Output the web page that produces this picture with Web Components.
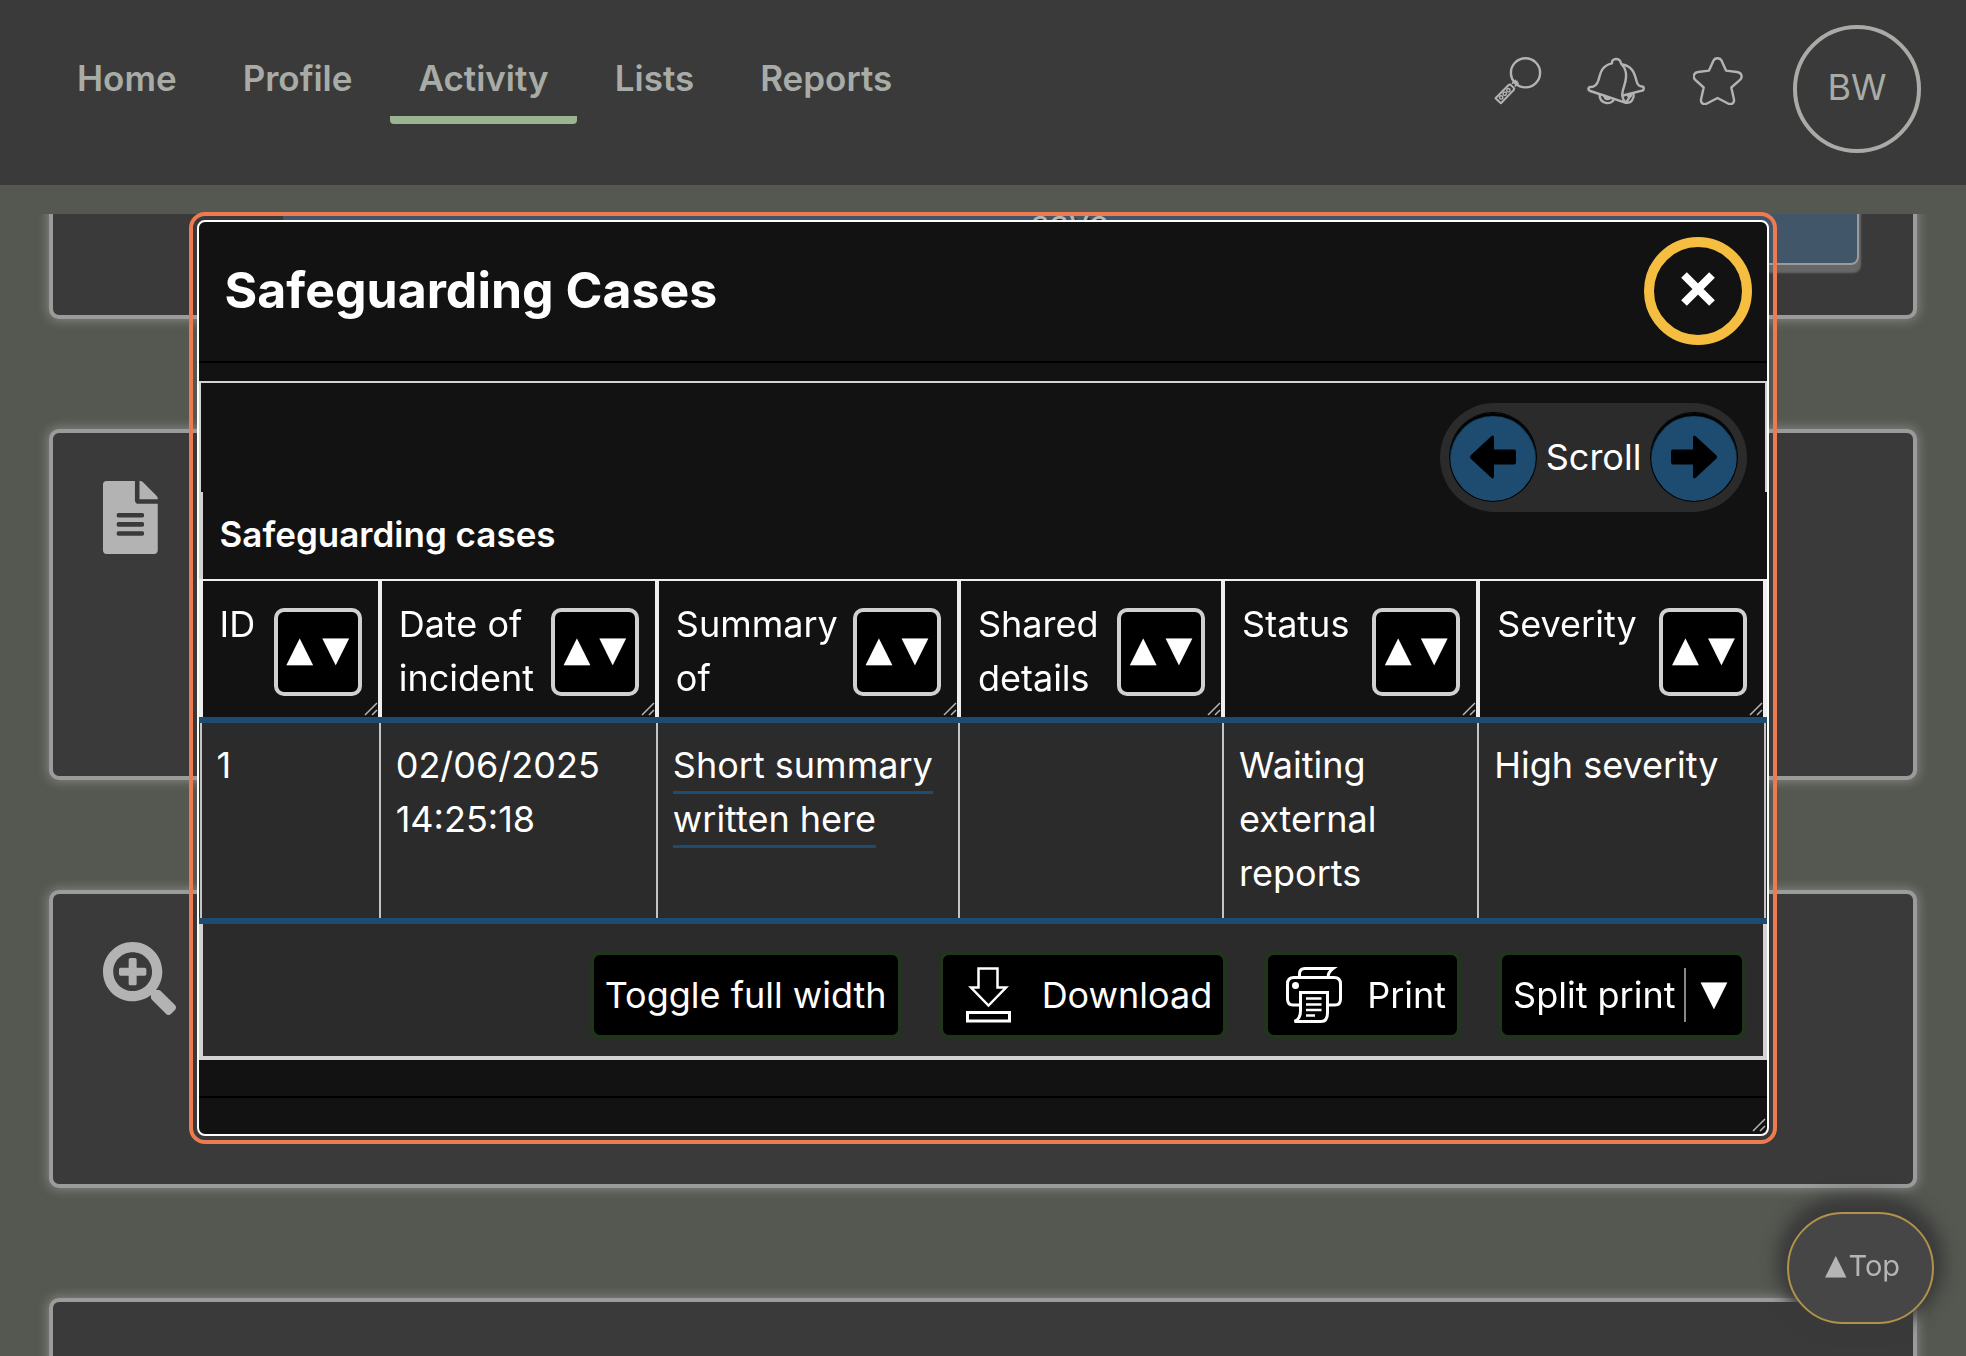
<!DOCTYPE html>
<html lang="en">
<head>
<meta charset="utf-8">
<title>Activity - Safeguarding Cases</title>
<style>
:root {
  --page: #545850;
  --surface: #3a3a3a;
  --edge: #9b9b9b;
  --muted: #a9aca6;
  --icon: #b3b3b3;
  --blue: #1d4c70;
  --ink: #121212;
  --panel: #2b2b2b;
  --rule: #d3d3d3;
  --text: 36px;
  --bold: 35px;
  --line: 54px;
}
html, body { margin: 0; height: 100%; }
body {
  display: flex;
  flex-direction: column;
  overflow: hidden;
  background: var(--page);
  color: #fff;
  font: 400 var(--text)/var(--line) Inter, "Liberation Sans", sans-serif;
}
main {
  flex: 1;
  min-height: 0;
  margin-top: 29px;
  padding: 0 49px;
  overflow: hidden;
  display: flex;
  flex-direction: column;
  gap: 110px;
}
content-card { flex: none; }
content-card:first-child { margin-top: -60px; }
content-card:nth-child(2) { min-height: 351px; }
content-card:nth-child(3) { min-height: 298px; }
content-card:nth-child(4) { min-height: 298px; }
</style>
</head>
<body>
<app-header>
  <nav-link href="#home">Home</nav-link>
  <nav-link href="#profile">Profile</nav-link>
  <nav-link href="#activity" current>Activity</nav-link>
  <nav-link href="#lists">Lists</nav-link>
  <nav-link href="#reports">Reports</nav-link>
</app-header>
<main>
  <content-card><save-button>save</save-button></content-card>
  <content-card icon="file"></content-card>
  <content-card icon="zoom"></content-card>
  <content-card></content-card>
</main>
<back-to-top></back-to-top>
<modal-dialog heading="Safeguarding Cases">
  <case-table></case-table>
</modal-dialog>

<script>
function define(name, markup, setup) {
  const template = document.createElement("template");
  customElements.define(name, class extends HTMLElement {
    constructor() {
      super();
      template.innerHTML = markup;
      this.attachShadow({ mode: "open" }).append(template.content.cloneNode(true));
    }
    connectedCallback() { if (setup) setup(this, this.shadowRoot); }
  });
}

const base = `:host,*{box-sizing:border-box} button{font:inherit;color:inherit;margin:0;padding:0;cursor:pointer} svg{display:block}`;

define("nav-link", `
<style>${base}
:host { display: block; }
a { display: block; padding: 0 28px 11px; border-bottom: 8px solid transparent; border-radius: 4px; color: var(--muted); font-size: var(--bold); font-weight: 600; text-decoration: none; }
:host([current]) a { border-bottom-color: #9cb491; }
</style>
<a><slot></slot></a>`, (el, root) => {
  const a = root.querySelector("a");
  a.href = el.getAttribute("href");
  if (el.hasAttribute("current")) a.setAttribute("aria-current", "page");
});

define("app-header", `
<style>${base}
:host { display: flex; justify-content: space-between; align-items: flex-start; flex: none; height: 185px; padding: 25px 45px 0 49px; background: var(--surface); }
nav { display: flex; gap: 10px; padding-top: 26px; }
.tools { display: flex; align-items: center; gap: 40px; }
.tools button { width: 60px; padding-bottom: 16px; border: 0; background: none; display: flex; justify-content: center; }
.tools svg { flex: none; fill: none; stroke: var(--icon); stroke-width: 2.4; stroke-linejoin: round; stroke-linecap: round; }
.tools .avatar { width: 128px; height: 128px; margin-left: 5px; padding: 0 0 4px; align-items: center; border: 4px solid var(--muted); border-radius: 50%; color: var(--muted); }
</style>
<nav aria-label="Main"><slot></slot></nav>
<div class="tools">
  <button aria-label="Search"><svg width="48" height="48" viewBox="0 0 48 48">
    <circle cx="31.5" cy="15.8" r="14.6"/><path d="M18.6 26.2l2.7-2.7M21.3 28.8l2.7-2.7M21.5 26l1.5-1.5" stroke-width="1.8"/><path d="M1.500 41.200L14.600 28l1.600-.6 4 4-.6 1.700L6.900 46.200z" stroke-width="2"/><circle cx="7.200" cy="40.400" r="1.700" stroke-width="1.500"/><circle cx="10.800" cy="36.800" r="1.700" stroke-width="1.500"/><circle cx="14.400" cy="33.200" r="1.700" stroke-width="1.500"/>
  </svg></button>
  <button aria-label="Notifications"><svg width="62" height="48" viewBox="0 0 62 48">
    <path d="M25 6C24 1 33.500 0 34 6.500M25 6.300C13 9 13 19 11.500 23C10 28.500 7 30 3.500 30C.8 30.300.8 33.400 3.300 34L39 45.800C36 43 34.500 40 35.500 35C36.500 29 41 22 38.500 14C37.500 10.500 36 8.500 34 6.500"/>
    <path d="M35.500 7.500C45 9 47.500 16 49.500 24C50.500 28 52.500 29.500 55 29.500C57.300 29.500 57.300 33.300 55 33.700L36 38.500M39 45.800L44.500 36.800"/>
    <path d="M12.500 37.200C12.500 47.500 24.500 48.500 27 42M17.500 39C18 42.500 22 43 23 40.800M39 45.800C44.500 46.500 47.500 41 46.500 36.200M41 38C41.500 41 44 40 44 37"/>
  </svg></button>
  <button aria-label="Favourites"><svg width="50" height="48" viewBox="0 0 50 48">
    <path d="M20.500 3.500C22 .4 27 .4 28.500 3.500L33 13.600L44 15C48.700 15.500 50 20 47 22.800L38.300 30.500L41 42.500C41.500 46.500 38 48.300 34.500 46.300L24.500 41L14.500 46.300C11 48.300 7.500 46.500 8 42.500L10.700 30.500L2.300 22.800C-.7 20 .6 15.500 5 15L16 13.600z"/>
  </svg></button>
  <button class="avatar" aria-label="Account BW">BW</button>
</div>`);

define("save-button", `
<style>${base}
:host { display: block; }
button { display: block; width: 100%; padding: 8px 0 13px; border: 2px solid var(--edge); border-left: 0; border-radius: 8px; background: #42566a; box-shadow: 2px 8px 2px #676767; color: #b5b5ad; line-height: var(--line); text-shadow: 2px 2px 1px #222; }
</style>
<button><slot></slot></button>`);

define("content-card", `
<style>${base}
:host { display: block; border: 4px solid var(--edge); border-radius: 10px; background: var(--surface); box-shadow: 0 0 12px 1px rgba(190,190,190,.5); padding: 48px 50px; }
:host(:first-child) { padding: 28px 54px 50px 230px; }
svg { fill: var(--icon); height: 73px; }
</style>
<div class="icon"></div><slot></slot>`, (el, root) => {
  const art = {
    file: `<svg viewBox="0 0 384 512"><path d="M224 136V0H24C10.700 0 0 10.700 0 24v464c0 13.300 10.700 24 24 24h336c13.300 0 24-10.700 24-24V160H248c-13.200 0-24-10.800-24-24zm64 236c0 6.600-5.400 12-12 12H108c-6.600 0-12-5.400-12-12v-8c0-6.600 5.400-12 12-12h168c6.600 0 12 5.400 12 12v8zm0-64c0 6.600-5.400 12-12 12H108c-6.600 0-12-5.400-12-12v-8c0-6.600 5.400-12 12-12h168c6.600 0 12 5.400 12 12v8zm0-72v8c0 6.600-5.400 12-12 12H108c-6.600 0-12-5.400-12-12v-8c0-6.600 5.400-12 12-12h168c6.600 0 12 5.400 12 12zm96-114.100v6.100H256V0h6.100c6.400 0 12.500 2.500 17 7l97.900 98c4.500 4.500 7 10.600 7 16.900z"/></svg>`,
    zoom: `<svg viewBox="0 0 512 512"><path d="M304 192v32c0 6.600-5.400 12-12 12h-56v56c0 6.600-5.400 12-12 12h-32c-6.600 0-12-5.400-12-12v-56h-56c-6.600 0-12-5.400-12-12v-32c0-6.600 5.400-12 12-12h56v-56c0-6.600 5.400-12 12-12h32c6.600 0 12 5.400 12 12v56h56c6.600 0 12 5.400 12 12zm201 284.700L476.700 505c-9.400 9.400-24.600 9.400-33.900 0L343 405.300c-4.500-4.500-7-10.600-7-17V372c-35.300 27.600-79.700 44-128 44C93.100 416 0 322.900 0 208S93.100 0 208 0s208 93.100 208 208c0 48.300-16.400 92.700-44 128h16.300c6.400 0 12.500 2.500 17 7l99.700 99.700c9.300 9.400 9.300 24.600 0 34zM344 208c0-75.200-60.800-136-136-136S72 132.800 72 208s60.800 136 136 136 136-60.800 136-136z"/></svg>`
  };
  root.querySelector(".icon").innerHTML = art[el.getAttribute("icon")] || "";
});

define("back-to-top", `
<style>${base}
:host { position: fixed; right: 32px; bottom: 32px; }
button { display: flex; align-items: center; justify-content: center; gap: 2px; width: 147px; height: 112px; padding: 0 0 4px 4px; border: 2px solid #b0924a; border-radius: 56px; background: #464646; box-shadow: 0 -6px 16px 10px #3a3a3a; color: #b5b5b5; font-size: 29px; line-height: 36px; }
span { font: 28px/36px "DejaVu Sans", sans-serif; padding-bottom: 3px; }
</style>
<button><span>▲</span>Top</button>`);

const grip = `<svg class="grip" width="14" height="14" viewBox="0 0 14 14" fill="none" stroke="#b5b5b5" stroke-width="1.500" aria-hidden="true"><path d="M1 13L13 1M8 13l5-5"/></svg>`;

define("modal-dialog", `
<style>${base}
:host { position: fixed; inset: 0; display: flex; align-items: center; justify-content: center; }
section { position: relative; width: 80%; border: 2px solid #fff; border-radius: 8px; outline: 4px solid #ee7b4f; outline-offset: 4px; background: var(--ink); }
header { display: flex; align-items: center; justify-content: space-between; height: 141px; padding: 0 15px 2px 26px; border-bottom: 2px solid #000; }
h1 { margin: 0; padding-bottom: 2px; font-size: 50px; line-height: 72px; font-weight: 700; }
header button { display: flex; align-items: center; justify-content: center; width: 108px; height: 108px; padding-bottom: 4px; border: 10px solid #f5be41; border-radius: 50%; background: none; }
.body { padding: 18px 0 36px; border-bottom: 2px solid #000; }
footer { height: 36px; }
.grip { position: absolute; right: 1px; bottom: 2px; }
</style>
<section role="dialog" aria-labelledby="t">
  <header><h1 id="t"></h1><button aria-label="Close"><svg width="34" height="34" viewBox="0 0 34 34" stroke="#fff" stroke-width="8"><path d="M3 3l28 28M31 3L3 31"/></svg></button></header>
  <div class="body"><slot></slot></div>
  <footer></footer>
  ${grip}
</section>`, (el, root) => { root.querySelector("h1").textContent = el.getAttribute("heading"); });

define("scroll-control", `
<style>${base}
:host { display: flex; align-items: center; gap: 9px; padding: 9px 9px 10px; border-radius: 55px; background: var(--panel); }
button { display: flex; align-items: center; justify-content: center; width: 88px; height: 90px; border: 1px solid #000; border-radius: 50%; background: var(--blue); box-shadow: inset 0 3px 1px #000; }
</style>
<button aria-label="Scroll left"><svg width="46" height="44" viewBox="0 0 46 44"><path d="M1 20L21 1.500Q24 -1 24 3V14.500H44Q46 14.500 46 16.500V27.500Q46 29.500 44 29.500H24V41Q24 45 21 42.500L1 24Q-1 22 1 20z"/></svg></button>
<span>Scroll</span>
<button aria-label="Scroll right"><svg width="46" height="44" viewBox="0 0 46 44"><path d="M45 20L25 1.500Q22 -1 22 3V14.500H2Q0 14.500 0 16.500V27.500Q0 29.500 2 29.500H22V41Q22 45 25 42.500L45 24Q47 22 45 20z"/></svg></button>`);

define("sort-heading", `
<style>${base}
:host { position: relative; display: flex; align-items: flex-start; justify-content: space-between; gap: 12px; height: 136px; padding: 16px 16px 0 17px; overflow: hidden; }
button { flex: none; display: flex; align-items: center; justify-content: center; gap: 9px; width: 88px; height: 88px; margin-top: 11px; padding-bottom: 6px; border: 4px solid #d0d0d0; border-radius: 10px; background: #000; font: 35px/36px "DejaVu Sans", sans-serif; }
.grip { position: absolute; right: 0; bottom: 1px; }
</style>
<slot></slot><button aria-label="Sort"><span>▲</span><span>▼</span></button>${grip}`);

define("tool-button", `
<style>${base}
:host { display: block; }
button { display: flex; align-items: center; height: 88px; padding: 0 11px; border: 4px solid #20351c; border-radius: 10px; background: #000; white-space: nowrap; }
svg { width: 56px; height: 56px; margin: 0 25px 0 7px; fill: none; stroke: #fff; stroke-width: 3; }
.caret { margin-left: 9px; padding: 0 4px 4px 14px; border-left: 2px solid #888; font: 35px/50px "DejaVu Sans", sans-serif; }
</style>
<button><span class="art"></span><slot></slot></button>`, (el, root) => {
  const art = {
    download: `<svg viewBox="0 0 56 56"><path d="M17.500 1.500H36.500V20.500H45L27.500 38.500L10 20.500H17.500z" stroke-width="2.500"/><path d="M6.500 45.500H48.500V54H6.500z"/></svg>`,
    print: `<svg viewBox="0 0 56 56"><path d="M13.500 10.500V7Q13.500 1.500 19 1.500H47Q42 5 42 10.500M13 38H7Q1.500 38 1.500 32V17Q1.500 10.500 8 10.500H48Q54.500 10.500 54.500 17V32Q54.500 38 49 38H43"/><path d="M14.500 25.500H41.500V46Q41.500 54.500 35 54.500H8.500Q14.500 52 14.500 44z"/><circle cx="9.500" cy="18.500" r="3.500" fill="#fff" stroke="none"/><path d="M20 31.500H35.500M20 37.500H35.500M20 43H35.500M20 48.500H29" stroke-width="2.500"/></svg>`
  };
  const kind = el.getAttribute("icon");
  if (art[kind]) root.querySelector(".art").innerHTML = art[kind];
  if (el.hasAttribute("menu")) root.querySelector("button").insertAdjacentHTML("beforeend", `<span class="caret">▼</span>`);
});

define("case-table", `
<style>${base}
:host { display: block; }
.bar { display: flex; justify-content: flex-end; align-items: flex-start; height: 111px; padding: 20px 18px 0 0; border: 2px solid var(--rule); border-bottom: 0; }
table { width: 100%; table-layout: fixed; border-collapse: collapse; background: var(--panel); }
caption { padding: 15px 0 18px 17px; border-left: 4px solid var(--rule); background: var(--ink); text-align: left; font-size: var(--bold); font-weight: 600; }
th, td { padding: 0; text-align: left; vertical-align: top; font-weight: 400; }
th { border: 4px solid #eee; border-top-width: 2px; border-bottom: 6px solid var(--blue); background: var(--ink); }
td { border: 2px solid #c4c4c4; border-bottom: 6px solid var(--blue); padding: 15px 15px 18px; }
a { color: inherit; text-decoration: none; border-bottom: 3px solid var(--blue); padding-bottom: 4px; }
tfoot td { border: 4px solid var(--rule); padding: 27px 17px 17px; }
.actions { display: flex; justify-content: flex-end; gap: 37px; }
</style>
<div class="bar"><scroll-control></scroll-control></div>
<table>
  <caption>Safeguarding cases</caption>
  <colgroup><col style="width:179px"><col style="width:277px"><col style="width:302px"><col style="width:264px"><col style="width:255px"><col style="width:287px"></colgroup>
  <thead><tr>
    <th><sort-heading>ID</sort-heading></th>
    <th><sort-heading>Date of incident</sort-heading></th>
    <th><sort-heading>Summary of</sort-heading></th>
    <th><sort-heading>Shared details (</sort-heading></th>
    <th><sort-heading>Status</sort-heading></th>
    <th><sort-heading>Severity</sort-heading></th>
  </tr></thead>
  <tbody><tr>
    <td>1</td>
    <td>02/06/2025 14:25:18</td>
    <td><a href="#case-1">Short summary written here</a></td>
    <td></td>
    <td>Waiting external reports</td>
    <td>High severity</td>
  </tr></tbody>
  <tfoot><tr><td colspan="6"><div class="actions">
    <tool-button>Toggle full width</tool-button>
    <tool-button icon="download">Download</tool-button>
    <tool-button icon="print">Print</tool-button>
    <tool-button menu>Split print</tool-button>
  </div></td></tr></tfoot>
</table>`);
</script>
</body>
</html>
